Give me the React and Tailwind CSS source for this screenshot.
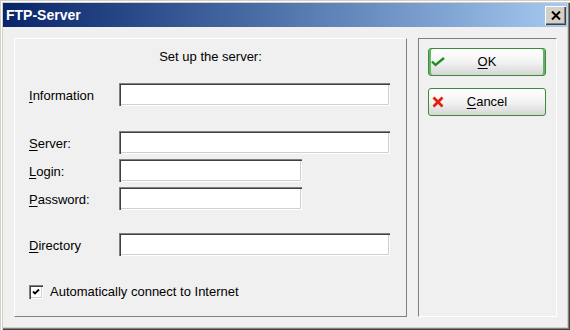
import React from 'react';

// classic sunken edit box / raised window edges
const sunken = 'shadow-[inset_1px_1px_#808080,inset_2px_2px_#404040,inset_-1px_-1px_#ffffff,inset_-2px_-2px_#d4d0c8]';

function Field({ underline, rest, width, className = '' }) {
  return (
    <div className={`flex items-center h-[23px] ${className}`}>
      <div className="w-[90px] pt-[2px] text-[13px] leading-[16px]">
        <span className="underline underline-offset-2">{underline}</span>{rest}
      </div>
      <div className={`h-[23px] bg-white ${sunken} ${width}`}></div>
    </div>
  );
}

function DlgButton({ icon, underline, rest, isDefault }) {
  return (
    <button
      className={`grid grid-cols-[14px_1fr_14px] items-center w-[118px] h-[28px] px-[2px] rounded-[3px] border border-[#3b8b3b] bg-linear-to-b from-white via-[#f3f3f3] to-[#d5d5d5] text-[13px] leading-[16px] text-black ${isDefault ? 'shadow-[inset_2px_0_#62b562,inset_-2px_0_#62b562]' : ''}`}
    >
      <span className="flex items-center justify-center">{icon}</span>
      <span className="text-center">
        <span className="underline underline-offset-2">{underline}</span>{rest}
      </span>
      <span></span>
    </button>
  );
}

export default function App() {
  return (
    <div
      className="w-[570px] h-[330px] p-[3px] bg-[#f0f0f0] flex flex-col shadow-[inset_1px_1px_#d4d0c8,inset_2px_2px_#ffffff,inset_3px_3px_#d4d0c8,inset_-1px_-1px_#404040,inset_-2px_-2px_#808080,inset_-3px_-3px_#d4d0c8]"
      style={{ fontFamily: '"Liberation Sans", Arial, sans-serif' }}
    >
      {/* Title bar */}
      <div className="h-[24px] flex items-center justify-between pl-[3px] pr-[1px] bg-linear-to-r from-[#0a246a] to-[#a6caf0]">
        <span className="text-white font-bold text-[14px] leading-[16px]">FTP-Server</span>
        <div className="w-[21px] h-[19px] bg-[#d4d0c8] flex items-center justify-center shadow-[inset_1px_1px_#ffffff,inset_-1px_-1px_#404040,inset_-2px_-2px_#808080]">
          <svg width="10" height="9" viewBox="0 0 10 9">
            <path d="M1 0.5 L9 8.5 M9 0.5 L1 8.5" stroke="#000" strokeWidth="2" />
          </svg>
        </div>
      </div>

      {/* Body */}
      <div className="flex pt-[11px] pl-[11px] gap-[11px]">
        {/* Left panel */}
        <div className="w-[393px] h-[279px] border border-t-white border-l-white border-r-[#808080] border-b-[#808080] pl-[14px]">
          <div className="mt-[10px] h-[16px] leading-[16px] text-[13px] text-center pr-[14px]">Set up the server:</div>
          <Field underline="I" rest="nformation" width="w-[271px]" className="mt-[18px]" />
          <Field underline="S" rest="erver:" width="w-[271px]" className="mt-[25px]" />
          <Field underline="L" rest="ogin:" width="w-[183px]" className="mt-[5px]" />
          <Field underline="P" rest="assword:" width="w-[183px]" className="mt-[5px]" />
          <Field underline="D" rest="irectory" width="w-[271px]" className="mt-[23px]" />
          <div className="mt-[28px] flex items-center gap-[7px] h-[15px]">
            <div className={`w-[14px] h-[14px] bg-white flex items-center justify-center ${sunken}`}>
              <svg width="8" height="8" viewBox="0 0 8 8">
                <path d="M1 3.5 L3 5.5 L7 1.5" stroke="#000" strokeWidth="1.8" fill="none" />
              </svg>
            </div>
            <span className="text-[13px] leading-[16px]">Automatically connect to Internet</span>
          </div>
        </div>

        {/* Right panel */}
        <div className="w-[139px] h-[279px] border border-t-[#808080] border-l-[#808080] border-r-white border-b-white pl-[9px] pt-[9px] flex flex-col gap-[12px]">
          <DlgButton
            isDefault
            underline="O"
            rest="K"
            icon={
              <svg width="14" height="10" viewBox="0 0 14 10">
                <path d="M1 4.5 L4.5 8 L13 1" stroke="#1e8f1e" strokeWidth="2.4" fill="none" />
              </svg>
            }
          />
          <DlgButton
            underline="C"
            rest="ancel"
            icon={
              <svg width="12" height="12" viewBox="0 0 12 12">
                <path d="M1.5 1.5 L10.5 10.5 M10.5 1.5 L1.5 10.5" stroke="#e02010" strokeWidth="2.8" />
              </svg>
            }
          />
        </div>
      </div>
    </div>
  );
}
